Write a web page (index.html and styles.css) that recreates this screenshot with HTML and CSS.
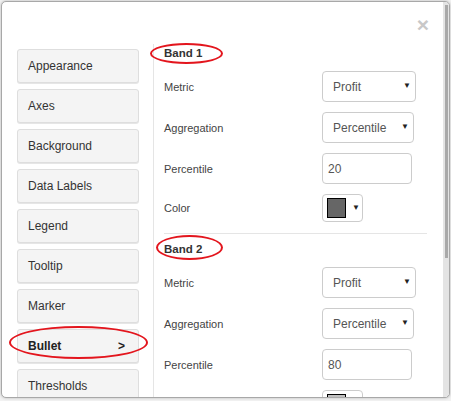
FILE: index.html
```html
<!DOCTYPE html>
<html>
<head>
<meta charset="utf-8">
<link rel="stylesheet" href="styles.css">
</head>
<body>
<div class="modal">
  <div class="content">
    <div class="header"><span class="close">×</span></div>
    <div class="body">
      <nav class="nav">
        <div class="nav-btn">Appearance</div>
        <div class="nav-btn">Axes</div>
        <div class="nav-btn">Background</div>
        <div class="nav-btn">Data Labels</div>
        <div class="nav-btn">Legend</div>
        <div class="nav-btn">Tooltip</div>
        <div class="nav-btn">Marker</div>
        <div class="nav-btn active"><span>Bullet</span><span>&gt;</span><i class="ring ring-bullet"></i></div>
        <div class="nav-btn">Thresholds</div>
      </nav>
      <section class="panel">
        <div class="band">
          <h3 class="band-title">Band 1<i class="ring ring-b1"></i></h3>
          <div class="row"><label>Metric</label><div class="select w94"><span>Profit</span><span class="arrow">▼</span></div></div>
          <div class="row"><label>Aggregation</label><div class="select w92"><span>Percentile</span><span class="arrow">▼</span></div></div>
          <div class="row"><label>Percentile</label><div class="input">20</div></div>
          <div class="row color-row"><label>Color</label><div class="color"><span class="swatch dark"></span><span class="arrow">▼</span></div></div>
        </div>
        <div class="band sep">
          <h3 class="band-title">Band 2<i class="ring ring-b2"></i></h3>
          <div class="row"><label>Metric</label><div class="select w94"><span>Profit</span><span class="arrow">▼</span></div></div>
          <div class="row"><label>Aggregation</label><div class="select w92"><span>Percentile</span><span class="arrow">▼</span></div></div>
          <div class="row"><label>Percentile</label><div class="input">80</div></div>
          <div class="row color-row"><label>Color</label><div class="color"><span class="swatch light"></span><span class="arrow">▼</span></div></div>
        </div>
      </section>
    </div>
  </div>
  <div class="scrollbar"><div class="thumb"></div></div>
</div>
</body>
</html>
```
FILE: styles.css
```css
* { box-sizing: border-box; }
html, body { margin: 0; padding: 0; }
body {
  width: 451px;
  height: 401px;
  background: #f2f2f2;
  padding: 1px 0 0 1px;
  font-family: "Liberation Sans", Arial, sans-serif;
  overflow: hidden;
}
.modal {
  width: 449px;
  height: 397px;
  background: #fff;
  border: 1px solid #a8a8a8;
  border-radius: 5px;
  display: flex;
  overflow: hidden;
  box-shadow: 0 0 3px rgba(0,0,0,0.25);
}
.content {
  flex: 1;
  min-width: 0;
  overflow: hidden;
}
.header {
  height: 42px;
  display: flex;
  justify-content: flex-end;
  align-items: center;
  padding-right: 14px;
}
.close {
  font-size: 21px;
  font-weight: bold;
  color: #c8c8c8;
  line-height: 1;
  margin-top: 2px;
}
.body {
  display: flex;
  align-items: flex-start;
}
.nav {
  width: 151px;
  flex: none;
  padding: 5px 14px 0 15px;
}
.nav-btn {
  position: relative;
  height: 34px;
  margin-bottom: 6px;
  background: #f4f4f4;
  border: 1px solid #dedede;
  border-radius: 3px;
  box-shadow: 0 1px 0 #e6e6e6;
  display: flex;
  align-items: center;
  justify-content: space-between;
  padding: 0 13px 0 10px;
  font-size: 12px;
  color: #333;
}
.nav-btn.active { font-weight: bold; color: #222; }
.ring {
  position: absolute;
  border: 2px solid #e3151d;
  border-radius: 50%;
  pointer-events: none;
}
.ring-bullet { left: -9px; top: -4px; width: 139px; height: 33px; }
.ring-b1 { left: -14px; top: -2px; width: 73px; height: 21px; }
.ring-b2 { left: -8px; top: -6px; width: 67px; height: 25px; }
.panel {
  flex: 1;
  border-left: 1px solid #e5e5e5;
  padding: 1px 16px 0 10px;
  min-height: 360px;
}
.band-title {
  position: relative;
  margin: 0 0 10px;
  height: 16px;
  line-height: 16px;
  font-size: 11.5px;
  font-weight: bold;
  color: #333;
}
.band.sep {
  border-top: 1px solid #e5e5e5;
  margin-top: 11px;
  padding-top: 7px;
}
.row {
  display: flex;
  align-items: center;
  height: 31px;
  margin-bottom: 10px;
}
.row.color-row { height: 28px; margin-bottom: 0; }
.row label {
  width: 158px;
  flex: none;
  font-size: 11px;
  color: #444;
}
.select, .input, .color {
  height: 100%;
  border: 1px solid #ccc;
  border-radius: 4px;
  display: flex;
  align-items: center;
  font-size: 12px;
  color: #555;
  background: #fff;
}
.select {
  justify-content: space-between;
  padding: 0 4px 0 10px;
}
.w94 { width: 94px; }
.w92 { width: 92px; }
.input { width: 90px; padding-left: 5px; }
.arrow {
  font-size: 8px;
  color: #222;
  margin-top: -2px;
}
.color {
  width: 41px;
  padding-left: 4px;
  gap: 6px;
}
.swatch {
  width: 19px;
  height: 20px;
  border: 1px solid #000;
}
.swatch.dark { background: #666; }
.swatch.light { background: #c0c0c0; }
.scrollbar {
  width: 6px;
  flex: none;
  background: #e4e4e4;
  padding: 3px 1px 0 2px;
  border-bottom-right-radius: 4px;
}
.thumb {
  height: 253px;
  background: #a9a9a9;
}
```
